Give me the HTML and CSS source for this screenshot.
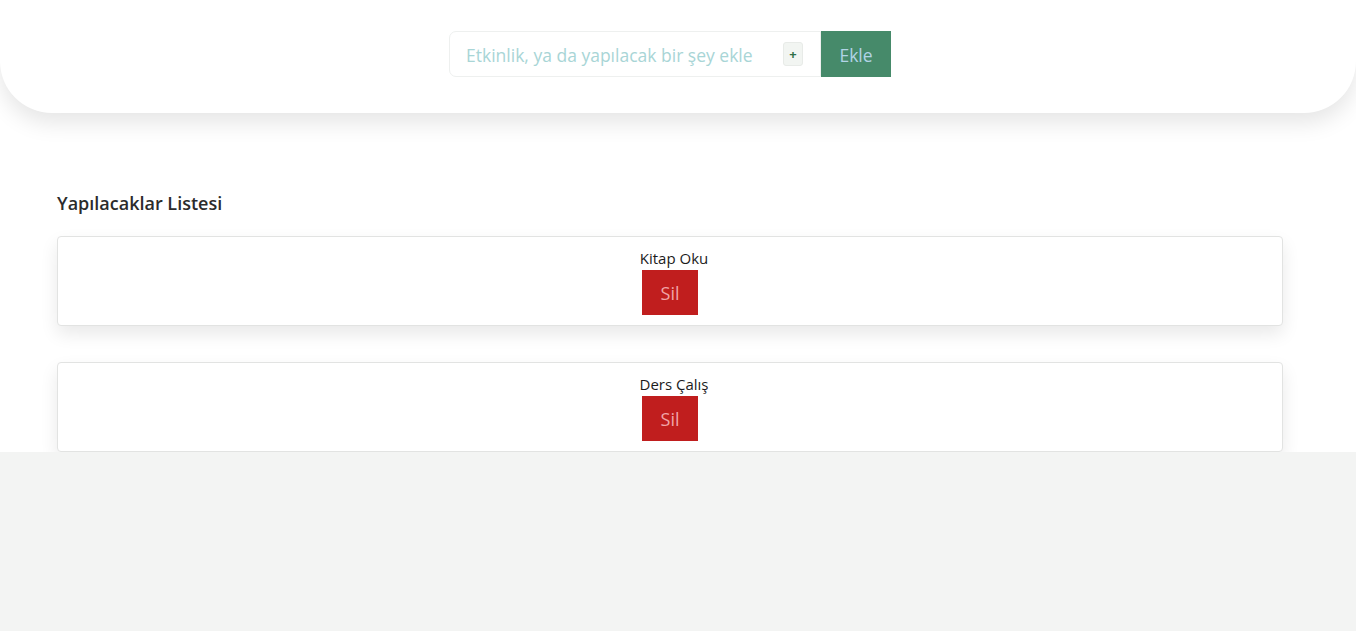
FILE: index.html
```html
<!DOCTYPE html>
<html lang="tr">
<head>
<meta charset="utf-8">
<title>Yapılacaklar</title>
<link rel="stylesheet" href="styles.css">
</head>
<body>
<div class="page">
  <header class="top">
    <form class="add-form">
      <div class="field">
        <input class="field-input" type="text" placeholder="Etkinlik, ya da yapılacak bir şey ekle">
        <span class="plus">+</span>
      </div>
      <button class="add-btn" type="button">Ekle</button>
    </form>
  </header>
  <main class="list">
    <h2 class="list-title">Yapılacaklar Listesi</h2>
    <div class="item">
      <div class="item-text">Kitap Oku</div>
      <button class="del-btn" type="button">Sil</button>
    </div>
    <div class="item">
      <div class="item-text">Ders Çalış</div>
      <button class="del-btn" type="button">Sil</button>
    </div>
  </main>
</div>
</body>
</html>
```
FILE: styles.css
```css
html, body {
  margin: 0;
  padding: 0;
}
body {
  background: #f3f4f3;
  font-family: "Open Sans", "Noto Sans", sans-serif;
  color: #222;
}
.page {
  background: #ffffff;
}
.top {
  background: #ffffff;
  height: 113px;
  border-radius: 0 0 52px 52px;
  box-shadow: 0 10px 22px rgba(0, 0, 0, 0.10);
  display: flex;
  justify-content: center;
  padding-right: 16px;
  box-sizing: border-box;
  position: relative;
  z-index: 1;
}
.add-form {
  display: flex;
  margin-top: 31px;
  height: 46px;
}
.field {
  width: 372px;
  height: 46px;
  box-sizing: border-box;
  border: 1px solid #eef0ef;
  border-radius: 7px 0 0 7px;
  display: flex;
  align-items: center;
  padding: 0 17px 0 16px;
}
.field-input {
  flex: 1;
  border: none;
  outline: none;
  font-family: inherit;
  font-size: 17.5px;
  background: transparent;
  padding: 2px 0 0;
  color: #333;
}
.field-input::placeholder {
  color: #a8d5d6;
}
.plus {
  width: 20px;
  height: 24px;
  box-sizing: border-box;
  border: 1px solid #e8ebe8;
  border-radius: 3px;
  background: #f2f5f2;
  color: #2f6f47;
  font-weight: 700;
  font-size: 13px;
  display: flex;
  align-items: center;
  justify-content: center;
}
.add-btn {
  width: 70px;
  height: 46px;
  border: none;
  background: #468a6a;
  color: #b2d4e6;
  font-family: inherit;
  font-size: 17.5px;
  padding: 1px 0 0;
}
.list {
  padding: 78px 73px 0 57px;
}
.list-title {
  margin: 0 0 21px;
  font-size: 18px;
  font-weight: 600;
  line-height: 24px;
  color: #2b2b2b;
}
.item {
  border: 1px solid #e2e3e2;
  border-radius: 4px;
  background: #fff;
  box-shadow: 0 8px 18px rgba(0, 0, 0, 0.09);
  display: flex;
  flex-direction: column;
  align-items: center;
  padding: 11px 0 10px;
  margin-bottom: 36px;
}
.item:last-child {
  margin-bottom: 0;
}
.item-text {
  font-size: 15px;
  line-height: 21px;
  color: #1c1c1c;
  padding-left: 8px;
}
.del-btn {
  margin-top: 1px;
  width: 56px;
  height: 45px;
  border: none;
  background: #c01e1e;
  color: #f0a5a8;
  font-family: inherit;
  font-size: 18px;
  padding: 0;
}
```
